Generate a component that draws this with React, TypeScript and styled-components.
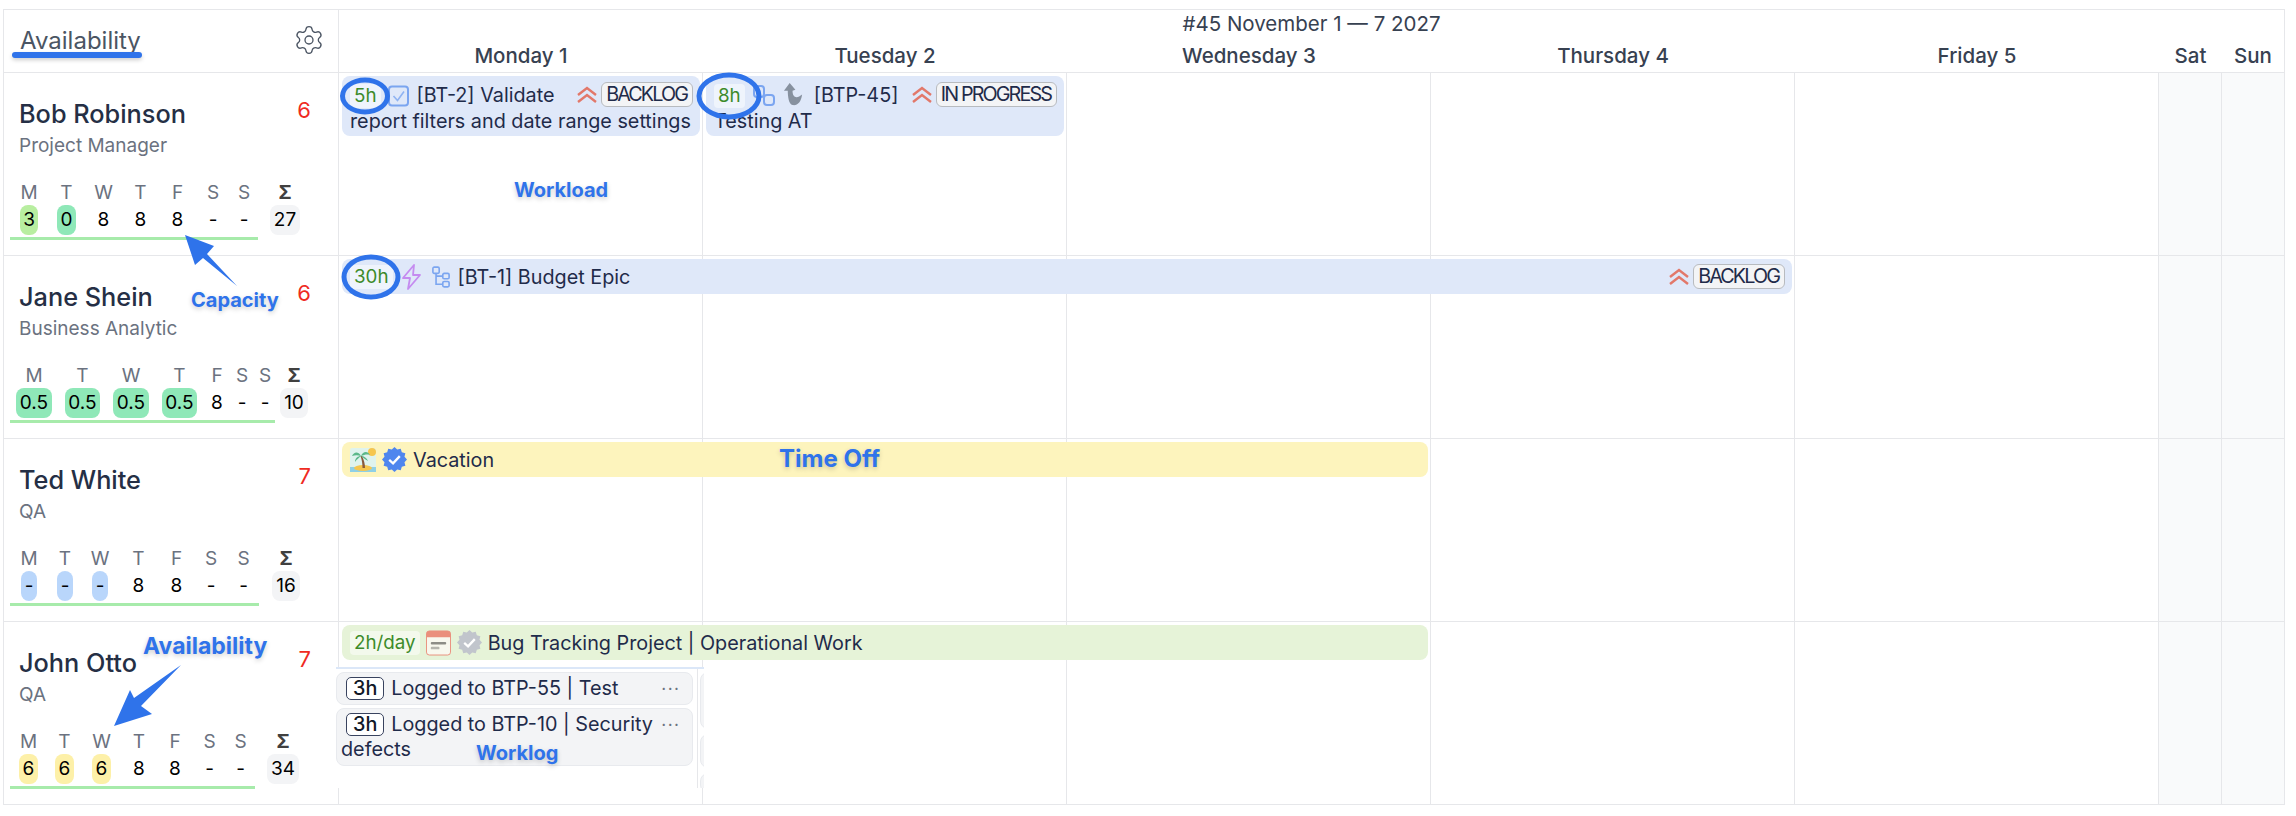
import React from "react";
import styled, { createGlobalStyle } from "styled-components";
import { Settings } from "lucide-react";

const BLUE = "#2f73ea";
const INK = "#1f2b4a";
const LINE = "#e6e7ea";
const COLUMNS = "repeat(5, 364px) 63px 62px";

const GlobalStyle = createGlobalStyle`
  html, body {
    margin: 0;
    padding: 0;
    background: #fff;
    font-family: Inter, "Liberation Sans", sans-serif;
    overflow: hidden;
  }
`;

const Page = styled.div`
  position: relative;
  width: 2296px;
  height: 816px;
  padding: 9px 0 0 3px;
  box-sizing: border-box;
`;

const Board = styled.div`
  width: 2282px;
  border-top: 1px solid ${LINE};
  border-left: 1px solid ${LINE};
  border-right: 1px solid ${LINE};
  box-sizing: border-box;
`;

const Head = styled.div`
  display: grid;
  grid-template-columns: 335px 1fr;
  height: 63px;
  border-bottom: 1px solid ${LINE};
  box-sizing: border-box;
`;

const Corner = styled.div`
  display: flex;
  align-items: center;
  justify-content: space-between;
  padding: 0 13px 2px 16px;
  border-right: 1px solid ${LINE};
  color: #4b5563;
`;

const CornerTitle = styled.span`
  font-size: 24px;
  color: #4b5563;
`;

const HeadRight = styled.div`
  display: flex;
  flex-direction: column;
`;

const WeekTitle = styled.div`
  height: 29px;
  font-size: 20.5px;
  line-height: 27px;
  text-align: center;
  color: #374151;
`;

const DayGrid = styled.div`
  display: grid;
  grid-template-columns: ${COLUMNS};
`;

const DayLabel = styled.div`
  font-size: 20.5px;
  font-weight: 500;
  line-height: 33px;
  text-align: center;
  color: #374151;
`;

const Row = styled.div`
  display: grid;
  grid-template-columns: 335px 1fr;
  height: 183px;
  border-bottom: 1px solid ${LINE};
  box-sizing: border-box;
`;

const Person = styled.div`
  padding: 27px 0 0 15px;
  border-right: 1px solid ${LINE};
`;

const NameLine = styled.div`
  display: flex;
  justify-content: space-between;
  align-items: flex-start;
  padding-right: 27px;
`;

const Name = styled.div`
  font-size: 25.3px;
  line-height: 28px;
  font-weight: 500;
  color: #252f45;
`;

const Count = styled.div`
  font-size: 22px;
  line-height: 20px;
  color: #ef2b1f;
`;

const Role = styled.div`
  margin-top: 6px;
  font-size: 19px;
  line-height: 24px;
  color: #6b7280;
`;

const Stats = styled.div<{ $cols: string }>`
  display: grid;
  grid-template-columns: ${(p) => p.$cols};
  margin: 23px 0 0 -9px;
  justify-items: center;
`;

const Letter = styled.div<{ $sum?: boolean }>`
  font-size: 19px;
  line-height: 24px;
  color: ${(p) => (p.$sum ? "#404040" : "#6b7280")};
  font-weight: ${(p) => (p.$sum ? 700 : 400)};
`;

const Value = styled.div<{ $bg?: string }>`
  height: 30px;
  padding: 0 3.5px;
  font-size: 19px;
  line-height: 30px;
  color: #000;
  border-radius: 8px;
  background: ${(p) => p.$bg || "transparent"};
`;

const SumValue = styled(Value)`
  padding: 0 4px;
  background: #f3f4f6;
`;

const Underline = styled.div<{ $width: number }>`
  width: ${(p) => p.$width}px;
  height: 3px;
  margin: 2px 0 0 -9px;
  background: #a7ebab;
`;

const Timeline = styled.div`
  display: grid;
  grid-template-columns: ${COLUMNS};
  grid-template-rows: 100%;
  position: relative;
  min-height: 0;
`;

const DayCell = styled.div<{ $col: number; $weekend?: boolean }>`
  grid-row: 1;
  grid-column: ${(p) => p.$col};
  border-right: 1px solid ${LINE};
  background: ${(p) => (p.$weekend ? "#f9fafb" : "#fff")};
  &:nth-child(7) {
    border-right: none;
  }
`;

const Bar = styled.div<{ $start: number; $span: number; $bg: string }>`
  grid-row: 1;
  grid-column: ${(p) => p.$start} / span ${(p) => p.$span};
  align-self: start;
  margin: 3px 3px 0 3px;
  padding: 0 7px 0 8px;
  border-radius: 8px;
  background: ${(p) => p.$bg};
  color: ${INK};
  font-size: 19.8px;
  line-height: 26px;
  z-index: 1;
`;

const WrapBar = styled(Bar)`
  height: 60px;
  padding-top: 6px;
  box-sizing: border-box;
  white-space: nowrap;
`;

const LineBar = styled(Bar)`
  display: flex;
  align-items: center;
  gap: 6px;
  height: 35px;
`;

const Hours = styled.span`
  position: relative;
  display: inline-block;
  height: 24px;
  padding: 0 4px;
  margin-right: 7px;
  font-size: 18.8px;
  line-height: 24px;
  border-radius: 4px;
  color: #3d8b2a;
  background: rgba(255, 255, 255, 0.5);
`;

const FlexHours = styled(Hours)`
  margin-right: 0;
`;

const Ring = styled.span<{ $w: number; $h: number }>`
  position: absolute;
  left: 50%;
  top: 50%;
  width: ${(p) => p.$w}px;
  height: ${(p) => p.$h}px;
  transform: translate(-50%, -50%);
  border: 5.5px solid ${BLUE};
  border-radius: 50%;
  box-sizing: border-box;
`;

const Status = styled.span`
  float: right;
  display: inline-flex;
  align-items: center;
  gap: 4px;
`;

const PushedStatus = styled(Status)`
  float: none;
  margin: 0 0 0 auto;
`;

const Badge = styled.span`
  display: inline-block;
  height: 25px;
  padding: 0 5px 0 4px;
  line-height: 23px;
  box-sizing: border-box;
  border: 1px solid #b8bbbf;
  border-radius: 6px;
  background: #f3f4f6;
  letter-spacing: -1.9px;
  white-space: nowrap;
`;

const IconSlot = styled.span<{ $right: number }>`
  display: inline-flex;
  vertical-align: -5px;
  margin: -4px ${(p) => p.$right}px -4px 0;
`;

const FlexSlot = styled.span<{ $left: number; $right: number }>`
  display: inline-flex;
  margin: 0 ${(p) => p.$right}px 0 ${(p) => p.$left}px;
`;

const LogPanel = styled.div`
  position: absolute;
  left: -3px;
  top: 45px;
  display: flex;
  width: 368px;
  height: 121px;
  padding-top: 3px;
  background: #fff;
  border-top: 2px solid #dbe7f8;
  box-sizing: border-box;
  z-index: 2;
`;

const LogColumn = styled.div`
  display: flex;
  flex-direction: column;
  align-items: stretch;
  gap: 3px;
  width: 357px;
  flex: none;
`;

const LogCard = styled.div`
  position: relative;
  padding: 3px 25px 3px 4px;
  border: 1px solid #e8eaee;
  border-radius: 8px;
  background: #f3f4f6;
  color: ${INK};
  font-size: 19.8px;
  line-height: 25px;
`;

const LogHours = styled.span`
  display: inline-block;
  height: 23px;
  margin: 0 7px 0 5px;
  padding: 0 6px;
  line-height: 21px;
  border: 1px solid #39435f;
  border-radius: 5px;
  box-sizing: border-box;
  background: #fff;
  font-weight: 500;
  color: #111827;
`;

const Dots = styled.span`
  position: absolute;
  right: 11px;
  top: 3px;
  font-size: 7px;
  line-height: 25px;
  letter-spacing: 2.5px;
  color: #6b7280;
`;

const ColumnRule = styled.div`
  width: 1px;
  margin-left: 4px;
  margin-top: -3px;
  background: ${LINE};
  flex: none;
`;

const NextColumn = styled.div`
  display: flex;
  flex-direction: column;
  gap: 5px;
  width: 4px;
  margin-left: 2px;
  overflow: hidden;
`;

const Sliver = styled.div<{ $h: number }>`
  width: 16px;
  height: ${(p) => p.$h}px;
  flex: none;
  border: 1px solid #e8eaee;
  border-radius: 8px;
  background: #f3f4f6;
`;

const Note = styled.div<{ $x: number; $y: number; $size?: number }>`
  position: absolute;
  left: ${(p) => p.$x}px;
  top: ${(p) => p.$y}px;
  font-size: ${(p) => p.$size ?? 20}px;
  line-height: 24px;
  font-weight: 700;
  color: ${BLUE};
  text-shadow: 0 2px 5px rgba(0, 0, 0, 0.2);
  z-index: 5;
`;

const TitleMark = styled.div`
  position: absolute;
  left: 12px;
  top: 52px;
  width: 130px;
  height: 6px;
  border-radius: 3px;
  background: ${BLUE};
  box-shadow: 0 2px 4px rgba(0, 0, 0, 0.2);
`;

const ArrowLayer = styled.svg`
  position: absolute;
  left: 0;
  top: 0;
  pointer-events: none;
  z-index: 5;
`;

const Chevrons = () => (
  <svg width="20" height="18" viewBox="0 0 20 18" fill="none" stroke="#e2786a" strokeWidth="2.4">
    <polyline points="1,9 10,2 19,9" />
    <polyline points="1,16 10,9 19,16" />
  </svg>
);

const CheckBox = () => (
  <svg width="21" height="22" viewBox="0 0 21 22" fill="none">
    <rect x="1" y="1.5" width="19" height="19" rx="3" stroke="#7ba5f0" strokeWidth="2" />
    <polyline points="5.5,11 9.5,15.5 16,6.5" stroke="#8fb3f2" strokeWidth="1.6" />
  </svg>
);

const LinkSquares = () => (
  <svg width="24" height="22" viewBox="0 0 24 22" fill="none" stroke="#7ba5f0" strokeWidth="2">
    <rect x="2" y="1" width="10" height="11" rx="3" />
    <rect x="12" y="10" width="10" height="10" rx="3" />
  </svg>
);

const TurnArrow = () => (
  <svg width="21" height="25" viewBox="0 0 22 26" style={{ filter: "blur(0.6px)" }}>
    <path d="M7 1 L13 8 L10 9 C10 15 13 17 17 15 L20 13 C19 21 15 25 10 24 C6 23 5 15 5 9 L1 9 Z" fill="#87919f" />
  </svg>
);

const Bolt = () => (
  <svg width="21" height="26" viewBox="0 0 21 26" fill="none" stroke="#c58bf0" strokeWidth="1.8" strokeLinejoin="round">
    <path d="M13 1 L2 14 L9 14 L7 25 L19 11 L12 11 Z" />
  </svg>
);

const Hierarchy = () => (
  <svg width="18" height="24" viewBox="0 0 20 24" fill="none" stroke="#7ba5f0" strokeWidth="1.8">
    <rect x="1" y="1" width="7" height="7" rx="1.5" />
    <rect x="12" y="8" width="7" height="6" rx="1.5" />
    <rect x="12" y="17" width="7" height="6" rx="1.5" />
    <path d="M4.5 8 V20 H12 M4.5 11 H12" />
  </svg>
);

const sealPoints = () => {
  const pts: string[] = [];
  for (let i = 0; i < 24; i++) {
    const r = i % 2 === 0 ? 13 : 10.8;
    const a = (i / 24) * Math.PI * 2;
    pts.push(`${(13 + r * Math.cos(a)).toFixed(1)},${(13 + r * Math.sin(a)).toFixed(1)}`);
  }
  return pts.join(" ");
};

const Seal = ({ color }: { color: string }) => (
  <svg width="25" height="25" viewBox="0 0 26 26" fill="none">
    <polygon points={sealPoints()} fill={color} strokeLinejoin="round" />
    <polyline points="7.5,13.5 11.5,17 18.5,9.5" stroke="#fff" strokeWidth="2.4" />
  </svg>
);

const PalmTile = () => (
  <svg width="26" height="24" viewBox="0 0 26 24">
    <rect width="26" height="24" rx="2" fill="#dff3ee" />
    <circle cx="22" cy="4" r="4" fill="#f6c64e" />
    <rect y="19" width="26" height="5" fill="#8fd0e6" />
    <ellipse cx="13" cy="20" rx="9" ry="3" fill="#f6c64e" />
    <path d="M12 8 C14 12 15 16 15 20 L12.5 20 C12.5 16 12 12 10.5 8 Z" fill="#8a5a3c" />
    <path d="M11 8 C8 3 4 4 2 8 C5 7 8 7 11 8 Z M11 8 C13 3 18 3 20 7 C17 6 14 7 11 8 Z M11 8 C8 8 5 10 5 14 C7 11 9 10 11 8 Z M11 8 C14 8 17 10 18 13 C15 11 13 10 11 8 Z" fill="#5cb88a" />
  </svg>
);

const CalendarTile = () => (
  <svg width="25" height="26" viewBox="0 0 26 26">
    <rect x="0.5" y="0.5" width="25" height="25" rx="3" fill="#f8f8ee" stroke="#ea8f7c" />
    <path d="M0.5 3.5 a3 3 0 0 1 3 -3 h19 a3 3 0 0 1 3 3 v3.5 h-25 Z" fill="#ea8f7c" />
    <rect x="5" y="12" width="16" height="2.6" rx="1" fill="#8d8d86" />
    <rect x="5" y="17" width="9" height="2.6" rx="1" fill="#b5b5ad" />
  </svg>
);

const Days = () => (
  <>
    {[1, 2, 3, 4, 5, 6, 7].map((col) => (
      <DayCell key={col} $col={col} $weekend={col > 5} />
    ))}
  </>
);

type Stat = { day: string; value: string; bg?: string };

type PersonData = {
  name: string;
  role: string;
  count: string;
  cols: string;
  line: number;
  total: string;
  stats: Stat[];
};

const GREEN = "#b8eea0";
const MINT = "#8fe8b8";
const SKY = "#b9d6fb";
const SAND = "#fdf0a8";

const week = (values: string[], bgs: (string | undefined)[]): Stat[] =>
  ["M", "T", "W", "T", "F", "S", "S"].map((day, i) => ({ day, value: values[i], bg: bgs[i] }));

const people: PersonData[] = [
  {
    name: "Bob Robinson",
    role: "Project Manager",
    count: "6",
    cols: "38px 37px 37px 37px 37px 34px 28px 54px",
    line: 248,
    total: "27",
    stats: week(["3", "0", "8", "8", "8", "-", "-"], [GREEN, MINT]),
  },
  {
    name: "Jane Shein",
    role: "Business Analytic",
    count: "6",
    cols: "48px 49px 48px 49px 26px 24px 22px 36px",
    line: 265,
    total: "10",
    stats: week(["0.5", "0.5", "0.5", "0.5", "8", "-", "-"], [MINT, MINT, MINT, MINT]),
  },
  {
    name: "Ted White",
    role: "QA",
    count: "7",
    cols: "38px 34px 36px 41px 35px 34px 31px 54px",
    line: 249,
    total: "16",
    stats: week(["-", "-", "-", "8", "8", "-", "-"], [SKY, SKY, SKY]),
  },
  {
    name: "John Otto",
    role: "QA",
    count: "7",
    cols: "37px 35px 39px 36px 36px 33px 29px 56px",
    line: 245,
    total: "34",
    stats: week(["6", "6", "6", "8", "8", "-", "-"], [SAND, SAND, SAND]),
  },
];

const PersonCell = ({ data }: { data: PersonData }) => (
  <Person>
    <NameLine>
      <Name>{data.name}</Name>
      <Count>{data.count}</Count>
    </NameLine>
    <Role>{data.role}</Role>
    <Stats $cols={data.cols}>
      {data.stats.map((s, i) => (
        <Letter key={i}>{s.day}</Letter>
      ))}
      <Letter $sum>Σ</Letter>
      {data.stats.map((s, i) => (
        <Value key={i} $bg={s.bg}>
          {s.value}
        </Value>
      ))}
      <SumValue>{data.total}</SumValue>
    </Stats>
    <Underline $width={data.line} />
  </Person>
);

const days = ["Monday 1", "Tuesday 2", "Wednesday 3", "Thursday 4", "Friday 5", "Sat", "Sun"];

export default function App() {
  return (
    <Page>
      <GlobalStyle />
      <Board>
        <Head>
          <Corner>
            <CornerTitle>Availability</CornerTitle>
            <Settings size={32} strokeWidth={1} />
          </Corner>
          <HeadRight>
            <WeekTitle>#45 November 1 — 7 2027</WeekTitle>
            <DayGrid>
              {days.map((d) => (
                <DayLabel key={d}>{d}</DayLabel>
              ))}
            </DayGrid>
          </HeadRight>
        </Head>

        <Row>
          <PersonCell data={people[0]} />
          <Timeline>
            <Days />
            <WrapBar $start={1} $span={1} $bg="#dfe8f9">
              <Hours>
                5h
                <Ring $w={50} $h={37} />
              </Hours>
              <IconSlot $right={8}>
                <CheckBox />
              </IconSlot>
              [BT-2] Validate
              <Status>
                <Chevrons />
                <Badge>BACKLOG</Badge>
              </Status>
              <br />
              report filters and date range settings
            </WrapBar>
            <WrapBar $start={2} $span={1} $bg="#dfe8f9">
              <Hours>
                8h
                <Ring $w={65} $h={47} />
              </Hours>
              <IconSlot $right={7}>
                <LinkSquares />
              </IconSlot>
              <IconSlot $right={10}>
                <TurnArrow />
              </IconSlot>
              [BTP-45]
              <Status>
                <Chevrons />
                <Badge>IN PROGRESS</Badge>
              </Status>
              <br />
              Testing AT
            </WrapBar>
          </Timeline>
        </Row>

        <Row>
          <PersonCell data={people[1]} />
          <Timeline>
            <Days />
            <LineBar $start={1} $span={4} $bg="#dfe8f9">
              <FlexHours>
                30h
                <Ring $w={59} $h={45} />
              </FlexHours>
              <FlexSlot $left={2} $right={4}>
                <Bolt />
              </FlexSlot>
              <FlexSlot $left={0} $right={2}>
                <Hierarchy />
              </FlexSlot>
              <span>[BT-1] Budget Epic</span>
              <PushedStatus>
                <Chevrons />
                <Badge>BACKLOG</Badge>
              </PushedStatus>
            </LineBar>
          </Timeline>
        </Row>

        <Row>
          <PersonCell data={people[2]} />
          <Timeline>
            <Days />
            <LineBar $start={1} $span={3} $bg="#fdf4bd">
              <PalmTile />
              <Seal color="#4f86ee" />
              <span>Vacation</span>
            </LineBar>
          </Timeline>
        </Row>

        <Row>
          <PersonCell data={people[3]} />
          <Timeline>
            <Days />
            <LineBar $start={1} $span={3} $bg="#e6f3d8">
              <FlexHours>2h/day</FlexHours>
              <CalendarTile />
              <Seal color="#c1c5cc" />
              <span>Bug Tracking Project | Operational Work</span>
            </LineBar>
            <LogPanel>
              <LogColumn>
                <LogCard>
                  <LogHours>3h</LogHours>
                  Logged to BTP-55 | Test
                  <Dots>•••</Dots>
                </LogCard>
                <LogCard>
                  <LogHours>3h</LogHours>
                  Logged to BTP-10 | Security defects
                  <Dots>•••</Dots>
                </LogCard>
              </LogColumn>
              <ColumnRule />
              <NextColumn>
                <Sliver $h={55} />
                <Sliver $h={32} />
                <Sliver $h={18} />
              </NextColumn>
            </LogPanel>
          </Timeline>
        </Row>
      </Board>

      <TitleMark />
      <ArrowLayer width="2296" height="816" viewBox="0 0 2296 816">
        <polygon points="185,235 214,246 207,254 237,286 203,258 195,265" fill={BLUE} />
        <polygon points="114,726 130,690 134,698 181,665 141,706 152,714" fill={BLUE} />
      </ArrowLayer>
      <Note $x={514} $y={178}>Workload</Note>
      <Note $x={191} $y={288}>Capacity</Note>
      <Note $x={779} $y={447} $size={24}>Time Off</Note>
      <Note $x={143} $y={634} $size={23}>Availability</Note>
      <Note $x={476} $y={741}>Worklog</Note>
    </Page>
  );
}
